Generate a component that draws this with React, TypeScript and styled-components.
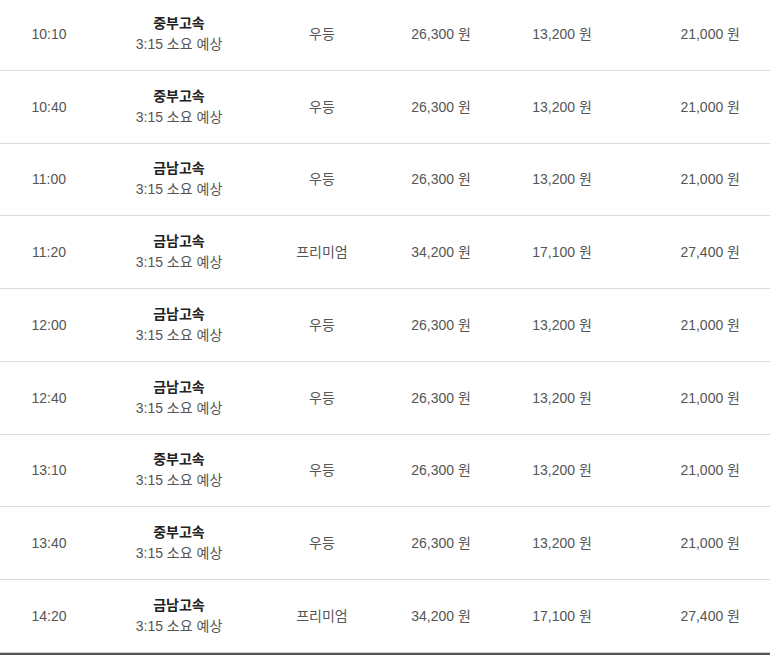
import React from "react";
import styled, { createGlobalStyle } from "styled-components";

const Global = createGlobalStyle`
  html, body { margin: 0; padding: 0; background: #fff; }
  body { font-family: "Liberation Sans", "Noto Sans CJK KR", sans-serif; overflow: hidden; }
`;

const Table = styled.div`
  width: 770px;
  margin-top: -2px;
  border-bottom: 2px solid #555;
`;

const Row = styled.div`
  display: grid;
  grid-template-columns: 98px 162px 124px 114px 128px 144px;
  height: 71.75px;
  align-items: center;
  border-bottom: 1px solid #dcdcdc;
  font-size: 14px;
  color: #555;
  &:last-child { border-bottom-color: #ccc; }
`;

const Cell = styled.div<{ $right?: boolean }>`
  text-align: ${(p) => (p.$right ? "right" : "center")};
  padding-right: ${(p) => (p.$right ? "30px" : "0")};
  line-height: 20px;
`;

const Company = styled.div`
  font-weight: bold;
  color: #222;
  line-height: 21px;
`;

const Duration = styled.div`
  color: #555;
  line-height: 21px;
`;

type R = { time: string; co: string; grade: string; a: string; b: string; c: string };

const rows: R[] = [
  { time: "10:10", co: "중부고속", grade: "우등", a: "26,300", b: "13,200", c: "21,000" },
  { time: "10:40", co: "중부고속", grade: "우등", a: "26,300", b: "13,200", c: "21,000" },
  { time: "11:00", co: "금남고속", grade: "우등", a: "26,300", b: "13,200", c: "21,000" },
  { time: "11:20", co: "금남고속", grade: "프리미엄", a: "34,200", b: "17,100", c: "27,400" },
  { time: "12:00", co: "금남고속", grade: "우등", a: "26,300", b: "13,200", c: "21,000" },
  { time: "12:40", co: "금남고속", grade: "우등", a: "26,300", b: "13,200", c: "21,000" },
  { time: "13:10", co: "중부고속", grade: "우등", a: "26,300", b: "13,200", c: "21,000" },
  { time: "13:40", co: "중부고속", grade: "우등", a: "26,300", b: "13,200", c: "21,000" },
  { time: "14:20", co: "금남고속", grade: "프리미엄", a: "34,200", b: "17,100", c: "27,400" },
];

export default function App() {
  return (
    <>
      <Global />
      <Table>
        {rows.map((r, i) => (
          <Row key={i}>
            <Cell>{r.time}</Cell>
            <Cell>
              <Company>{r.co}</Company>
              <Duration>3:15 소요 예상</Duration>
            </Cell>
            <Cell>{r.grade}</Cell>
            <Cell>{r.a} 원</Cell>
            <Cell>{r.b} 원</Cell>
            <Cell $right>{r.c} 원</Cell>
          </Row>
        ))}
      </Table>
    </>
  );
}
